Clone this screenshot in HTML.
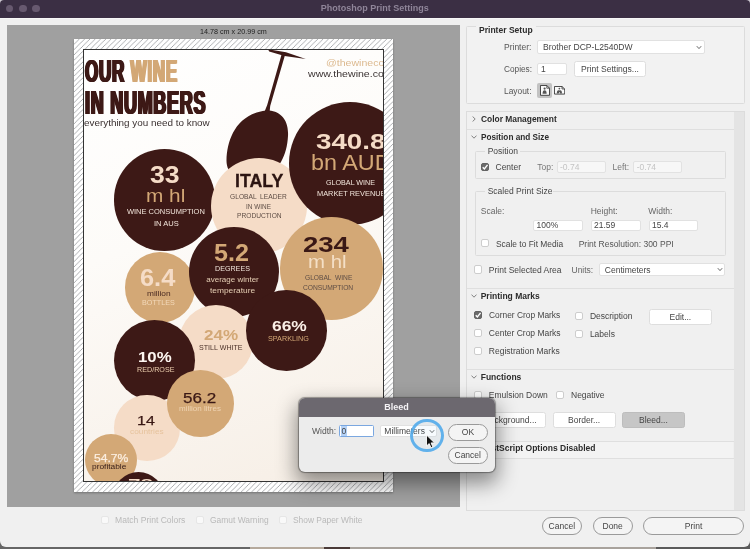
<!DOCTYPE html>
<html><head><meta charset="utf-8"><title>Photoshop Print Settings</title>
<style>
html,body{margin:0;padding:0}
body{width:750px;height:549px;position:relative;overflow:hidden;background:#4b4b4b;font-family:"Liberation Sans",sans-serif}
div,span,svg{position:absolute;box-sizing:border-box}
.t{white-space:pre;line-height:1;transform-origin:0 0}
.c{border-radius:50%}
.in{background:#fff;border:1px solid #e1e1e1;border-radius:2px}
.btn{background:#fff;border:1px solid #dedede;border-radius:2.5px}
.cb{background:#fff;border:1px solid #cdcdcd;border-radius:2px}
.fs{border:1px solid #dcdcdc;border-radius:1.5px}
.pill{background:#f4f4f4;border:1px solid #9a9a9a;border-radius:9px}
.sep{background:#dfdfdf}
</style></head><body>
<div style="left:0;top:0;width:750px;height:12px;background:#cfc8d3"></div>
<div style="left:0;top:540px;width:750px;height:9px;background:linear-gradient(to right,#666 0,#666 250px,#b5a99c 250px,#b5a99c 324px,#4a3a38 324px,#4a3a38 350px,#a8a29c 350px,#a8a29c 656px,#5a5a5a 656px)"></div>
<div id="win" style="will-change:transform;left:0;top:0;width:750px;height:546.8px;background:#f0f0f0;border-radius:4px 4px 6px 6px;overflow:hidden">
<div class="" style="left:0.00px;top:0.00px;width:750.00px;height:17.60px;background:#3b2f44"></div>
<div class="" style="left:0.00px;top:17.60px;width:750.00px;height:1.20px;background:#f7f7f7"></div>
<div class="c" style="left:5.60px;top:4.60px;width:7.80px;height:7.80px;background:#67596f"></div>
<div class="c" style="left:18.80px;top:4.60px;width:7.80px;height:7.80px;background:#67596f"></div>
<div class="c" style="left:32.20px;top:4.60px;width:7.80px;height:7.80px;background:#67596f"></div>
<span class="t" style="left:320.80px;top:4.08px;font-size:9px;color:#8f8599;font-weight:bold;">Photoshop Print Settings</span>
<div class="" style="left:6.50px;top:25.00px;width:453.10px;height:482.00px;background:#a0a0a0"></div>
<span class="t" style="left:200.00px;top:27.51px;font-size:7.2px;color:#1e1e1e;">14.78 cm x 20.99 cm</span>
<div class="" style="left:74.10px;top:39.10px;width:319.30px;height:453.00px;box-shadow:0 1px 2px rgba(0,0,0,0.28);background:#fff"></div>
<svg style="left:74.1px;top:39.1px" width="319.3" height="453" viewBox="0 0 319.3 453"><defs><pattern id="hatch" width="5.3" height="5.3" patternUnits="userSpaceOnUse"><path d="M-1 6.3 L6.3 -1 M-1 1 L1 -1 M4.3 6.3 L6.3 4.3" stroke="#97999c" stroke-width="0.8" fill="none"/></pattern></defs><rect x="0" y="0" width="319.3" height="453" fill="url(#hatch)"/></svg>
<div id="poster" style="left:83.4px;top:49.3px;width:300.7px;height:432.8px;overflow:hidden;background:linear-gradient(160deg,#ffffff 0%,#fdfbf8 40%,#f6eee5 100%)">
<div style="left:-83.4px;top:-49.3px;width:0;height:0">
<svg style="left:0;top:0;overflow:visible" width="750" height="549" viewBox="0 0 750 549"><g fill="#3d1916"><path d="M268 49.2 L286 52.2 L305.8 58.9 L284.5 56 L269.2 51.6 Z"/><path d="M282 53 L285.3 54 L270.2 106 L269.6 112 L264.8 111 L267.2 105 Z"/><path d="M266 110.5 C278 110 289 117.5 288 136 C287 155 279 172 262 178 C246 184 226 178 226.5 160 C227 140 236 114 266 110.5 Z"/></g></svg>
<div class="c" style="left:113.50px;top:149.40px;width:101.60px;height:101.60px;background:#3d1916"></div>
<div class="c" style="left:210.60px;top:157.80px;width:96.40px;height:96.40px;background:#f5dcc7"></div>
<div class="c" style="left:289.00px;top:102.20px;width:122.40px;height:122.40px;background:#3d1916"></div>
<div class="c" style="left:125.20px;top:252.40px;width:70.20px;height:70.20px;background:#d3a876"></div>
<div class="c" style="left:189.10px;top:226.50px;width:90.00px;height:90.00px;background:#3d1916"></div>
<div class="c" style="left:280.30px;top:217.20px;width:102.40px;height:102.40px;background:#d3a876"></div>
<div class="c" style="left:178.50px;top:304.60px;width:74.80px;height:74.80px;background:#f5dcc7"></div>
<div class="c" style="left:246.10px;top:290.40px;width:80.60px;height:80.60px;background:#3d1916"></div>
<div class="c" style="left:114.10px;top:319.90px;width:81.20px;height:81.20px;background:#3d1916"></div>
<div class="c" style="left:114.40px;top:395.40px;width:65.20px;height:65.20px;background:#f5dcc7"></div>
<div class="c" style="left:167.40px;top:370.10px;width:66.60px;height:66.60px;background:#d3a876"></div>
<div class="c" style="left:85.20px;top:434.20px;width:52.20px;height:52.20px;background:#d3a876"></div>
<div class="c" style="left:112.90px;top:471.80px;width:51.20px;height:51.20px;background:#3d1916"></div>
<span class="t" style="left:84.7px;top:55.67px;font-size:31.7px;font-weight:bold;letter-spacing:1.3px;color:#3d1916;text-shadow:0.9px 0 0 #3d1916,-0.9px 0 0 #3d1916,1.8px 0 0 #3d1916,-1.8px 0 0 #3d1916;transform:scaleX(0.5394)">OUR <span style="position:static;color:#d3a876;text-shadow:0.9px 0 0 #d3a876,-0.9px 0 0 #d3a876,1.8px 0 0 #d3a876,-1.8px 0 0 #d3a876;">WINE</span></span>
<span class="t" style="left:84.70px;top:86.57px;font-size:32.4px;color:#3d1916;font-weight:bold;letter-spacing:1.3px;transform:scaleX(0.5559);text-shadow:0.9px 0 0 #3d1916,-0.9px 0 0 #3d1916,1.8px 0 0 #3d1916,-1.8px 0 0 #3d1916;">IN NUMBERS</span>
<span class="t" style="left:84.20px;top:119.25px;font-size:8.8px;color:#3a3030;transform:scaleX(1.1229);">everything you need to know</span>
<span class="t" style="left:325.60px;top:57.90px;font-size:9.8px;color:#dcb98f;transform:scaleX(1.0781);">@thewineco</span>
<span class="t" style="left:308.00px;top:69.30px;font-size:9.8px;color:#3a3232;transform:scaleX(1.0802);">www.thewine.co</span>
<span class="t" style="left:150.10px;top:163.93px;font-size:23px;color:#f5dcc7;font-weight:bold;transform:scaleX(1.1570);">33</span>
<span class="t" style="left:145.50px;top:186.69px;font-size:18.8px;color:#d3a876;transform:scaleX(1.1065);">m hl</span>
<span class="t" style="left:126.90px;top:207.95px;font-size:7.5px;color:#f1e4da;">WINE CONSUMPTION</span>
<span class="t" style="left:153.80px;top:219.65px;font-size:7.5px;color:#f1e4da;transform:scaleX(1.0044);">IN AUS</span>
<span class="t" style="left:234.90px;top:172.09px;font-size:18.8px;color:#2c1512;font-weight:bold;transform:scaleX(0.9475);-webkit-text-stroke:0.3px #2c1512;">ITALY</span>
<span class="t" style="left:230.10px;top:192.95px;font-size:7.5px;color:#5e4d45;transform:scaleX(0.8871);">GLOBAL  LEADER</span>
<span class="t" style="left:246.00px;top:202.75px;font-size:7.5px;color:#5e4d45;transform:scaleX(0.8538);">IN WINE</span>
<span class="t" style="left:236.50px;top:212.35px;font-size:7.5px;color:#5e4d45;transform:scaleX(0.8846);">PRODUCTION</span>
<span class="t" style="left:315.60px;top:130.61px;font-size:22.2px;color:#f5dcc7;font-weight:bold;transform:scaleX(1.2510);">340.8</span>
<span class="t" style="left:310.60px;top:152.45px;font-size:22.5px;color:#d3a876;transform:scaleX(1.0381);">bn AUD</span>
<span class="t" style="left:326.10px;top:178.85px;font-size:7.5px;color:#f1e4da;transform:scaleX(0.9533);">GLOBAL WINE</span>
<span class="t" style="left:317.20px;top:189.85px;font-size:7.5px;color:#f1e4da;transform:scaleX(0.9861);">MARKET REVENUE</span>
<span class="t" style="left:303.10px;top:233.65px;font-size:22.5px;color:#3a1815;font-weight:bold;transform:scaleX(1.2226);">234</span>
<span class="t" style="left:307.50px;top:252.82px;font-size:18.4px;color:#f4dfc6;transform:scaleX(1.1075);">m hl</span>
<span class="t" style="left:304.60px;top:273.65px;font-size:7.5px;color:#5e4d45;transform:scaleX(0.8844);">GLOBAL  WINE</span>
<span class="t" style="left:303.40px;top:283.85px;font-size:7.5px;color:#5e4d45;transform:scaleX(0.8924);">CONSUMPTION</span>
<span class="t" style="left:214.10px;top:241.46px;font-size:24.5px;color:#d3a876;font-weight:bold;transform:scaleX(1.0276);">5.2</span>
<span class="t" style="left:214.70px;top:265.15px;font-size:7.5px;color:#f1e4da;transform:scaleX(0.9515);">DEGREES</span>
<span class="t" style="left:206.30px;top:275.53px;font-size:8px;color:#e6cfb4;">average winter</span>
<span class="t" style="left:209.60px;top:286.63px;font-size:8px;color:#e6cfb4;transform:scaleX(1.0456);">temperature</span>
<span class="t" style="left:271.70px;top:319.19px;font-size:14.9px;color:#faefe6;font-weight:bold;transform:scaleX(1.1669);">66%</span>
<span class="t" style="left:268.00px;top:334.72px;font-size:7.3px;color:#d3a876;transform:scaleX(0.9916);">SPARKLING</span>
<span class="t" style="left:140.30px;top:266.26px;font-size:24.5px;color:#f5dcc7;font-weight:bold;transform:scaleX(1.0364);">6.4</span>
<span class="t" style="left:147.40px;top:289.71px;font-size:7.2px;color:#4a2a22;transform:scaleX(1.1565);">million</span>
<span class="t" style="left:142.00px;top:298.92px;font-size:7.3px;color:#f3d9ba;transform:scaleX(0.9860);">BOTTLES</span>
<span class="t" style="left:203.90px;top:327.18px;font-size:15.5px;color:#d3a876;font-weight:bold;transform:scaleX(1.0992);">24%</span>
<span class="t" style="left:198.70px;top:343.97px;font-size:7.6px;color:#4a3028;transform:scaleX(0.9358);">STILL WHITE</span>
<span class="t" style="left:138.20px;top:349.15px;font-size:15.3px;color:#fdf6f0;font-weight:bold;transform:scaleX(1.0972);">10%</span>
<span class="t" style="left:136.90px;top:366.05px;font-size:7.5px;color:#eccfae;transform:scaleX(0.9573);">RED/ROSE</span>
<span class="t" style="left:182.80px;top:390.64px;font-size:14.6px;color:#3a1815;transform:scaleX(1.1683);-webkit-text-stroke:0.25px #3a1815;">56.2</span>
<span class="t" style="left:179.00px;top:405.37px;font-size:7.6px;color:#efd3b2;transform:scaleX(1.0580);">million litres</span>
<span class="t" style="left:136.90px;top:414.49px;font-size:13.6px;color:#3a1815;transform:scaleX(1.1766);-webkit-text-stroke:0.25px #3a1815;">14</span>
<span class="t" style="left:130.00px;top:428.17px;font-size:7.6px;color:#e6c39d;transform:scaleX(1.0928);">countries</span>
<span class="t" style="left:93.60px;top:451.68px;font-size:11.6px;color:#fbeee0;transform:scaleX(1.0459);-webkit-text-stroke:0.25px #fbeee0;">54.7%</span>
<span class="t" style="left:92.30px;top:462.57px;font-size:7.6px;color:#3a201a;transform:scaleX(1.1002);">profitable</span>
<span class="t" style="left:127.50px;top:476.60px;font-size:13px;color:#f5dcc7;font-weight:bold;transform:scaleX(1.7289);">78</span>
</div></div>
<div class="" style="left:83.20px;top:49.10px;width:301.10px;height:433.20px;border:0.7px solid #333"></div>
<div class="cb" style="left:101.10px;top:515.90px;width:8.20px;height:8.20px;border-color:#e6e6e6;background:#f9f9f9;"></div>
<span class="t" style="left:115.20px;top:516.22px;font-size:8.5px;color:#b9b9b9;transform:scaleX(1.0070);">Match Print Colors</span>
<div class="cb" style="left:196.10px;top:515.90px;width:8.20px;height:8.20px;border-color:#e6e6e6;background:#f9f9f9;"></div>
<span class="t" style="left:209.60px;top:516.22px;font-size:8.5px;color:#b9b9b9;transform:scaleX(0.9914);">Gamut Warning</span>
<div class="cb" style="left:278.80px;top:515.90px;width:8.20px;height:8.20px;border-color:#e6e6e6;background:#f9f9f9;"></div>
<span class="t" style="left:293.30px;top:516.22px;font-size:8.5px;color:#b9b9b9;transform:scaleX(0.9858);">Show Paper White</span>
<div class="fs" style="left:466.30px;top:25.90px;width:278.50px;height:78.10px;background:#f2f2f2"></div>
<div class="" style="left:476.00px;top:24.00px;width:60.00px;height:12.00px;background:linear-gradient(#f0f0f0 0,#f0f0f0 2.4px,#f2f2f2 2.4px)"></div>
<span class="t" style="left:479.20px;top:25.62px;font-size:8.5px;color:#2c2c2c;font-weight:bold;transform:scaleX(1.0043);">Printer Setup</span>
<span class="t" style="left:504.00px;top:43.22px;font-size:8.5px;color:#555;">Printer:</span>
<div class="in" style="left:537.00px;top:40.00px;width:167.70px;height:14.00px;"></div>
<span class="t" style="left:542.50px;top:43.22px;font-size:8.5px;color:#454545;transform:scaleX(1.0077);">Brother DCP-L2540DW</span>
<svg style="left:696px;top:44.5px" width="6" height="5" viewBox="0 0 6 5"><path d="M0.8 1.2 L3 3.6 L5.2 1.2" fill="none" stroke="#555" stroke-width="0.9"/></svg>
<span class="t" style="left:503.50px;top:65.22px;font-size:8.5px;color:#555;transform:scaleX(0.9715);">Copies:</span>
<div class="in" style="left:537.30px;top:63.20px;width:30.00px;height:11.60px;"></div>
<span class="t" style="left:541.00px;top:65.22px;font-size:8.5px;color:#454545;">1</span>
<div class="btn" style="left:573.50px;top:60.80px;width:72.00px;height:16.50px;"></div>
<span class="t" style="left:580.50px;top:65.22px;font-size:8.5px;color:#454545;transform:scaleX(1.0063);">Print Settings...</span>
<span class="t" style="left:504.00px;top:86.92px;font-size:8.5px;color:#555;transform:scaleX(0.9863);">Layout:</span>
<div class="" style="left:537.10px;top:83.30px;width:14.60px;height:14.40px;background:#c2c2c2;border-radius:2px"></div>
<svg style="left:539.9px;top:85.1px" width="10" height="10.8" viewBox="0 0 10 10.8"><path d="M0.5 0.5 H6.8 L9.5 3.2 V10.3 H0.5 Z" fill="#fbfbfb" stroke="#222" stroke-width="0.8"/><path d="M6.8 0.5 V3.2 H9.5" fill="none" stroke="#222" stroke-width="0.7"/><circle cx="4.6" cy="3.6" r="1.1" fill="#555"/><path d="M2.6 8.8 C2.6 6 3.4 5.2 4.6 5.2 C5.8 5.2 6.6 6 6.6 8.8 Z" fill="#555"/></svg>
<svg style="left:553.9px;top:86.1px" width="11.2" height="8.6" viewBox="0 0 11.2 8.6"><path d="M0.5 0.5 H8 L10.7 3 V8.1 H0.5 Z" fill="#fbfbfb" stroke="#222" stroke-width="0.8"/><path d="M8 0.5 V3 H10.7" fill="none" stroke="#222" stroke-width="0.7"/><circle cx="5.4" cy="2.6" r="0.9" fill="#555"/><path d="M2.8 7.4 C2.8 4.6 4 3.8 5.4 4.6 C6.8 3.8 8 4.6 8 7.4 L6.2 7.4 L5.4 5.8 L4.6 7.4 Z" fill="#555"/></svg>
<div class="" style="left:466.30px;top:110.90px;width:278.50px;height:399.90px;border:1px solid #dcdcdc;background:#f0f0f0"></div>
<div class="" style="left:734.00px;top:111.90px;width:9.80px;height:397.90px;background:#e4e4e4"></div>
<svg style="left:471.5px;top:116px" width="4" height="6" viewBox="0 0 4 6"><path d="M0.6 0.5 L3.2 3 L0.6 5.5" fill="none" stroke="#666" stroke-width="0.8"/></svg>
<span class="t" style="left:480.70px;top:115.12px;font-size:8.5px;color:#2c2c2c;font-weight:bold;transform:scaleX(0.9894);">Color Management</span>
<div class="sep" style="left:467.30px;top:128.80px;width:266.70px;height:1.00px;"></div>
<svg style="left:470.5px;top:134.8px" width="6" height="4" viewBox="0 0 6 4"><path d="M0.5 0.6 L3 3.2 L5.5 0.6" fill="none" stroke="#666" stroke-width="0.8"/></svg>
<span class="t" style="left:480.70px;top:132.92px;font-size:8.5px;color:#2c2c2c;font-weight:bold;transform:scaleX(0.9663);">Position and Size</span>
<div class="fs" style="left:474.50px;top:150.50px;width:251.50px;height:28.80px;"></div>
<div class="" style="left:484.50px;top:145.00px;width:35.50px;height:11.00px;background:#f0f0f0"></div>
<span class="t" style="left:487.70px;top:146.52px;font-size:8.5px;color:#444;">Position</span>
<div class="cb" style="left:480.60px;top:162.60px;width:8.20px;height:8.20px;background:#6b6b6b;border-color:#636363;"><svg style="left:-1px;top:-1px" width="8.2" height="8.2" viewBox="0 0 8 8"><path d="M1.7 4.2 L3.3 5.9 L6.4 1.9" fill="none" stroke="#fff" stroke-width="1.35"/></svg></div>
<span class="t" style="left:495.50px;top:162.92px;font-size:8.5px;color:#454545;">Center</span>
<span class="t" style="left:537.30px;top:162.92px;font-size:8.5px;color:#777;">Top:</span>
<div class="in" style="left:556.50px;top:161.30px;width:49.50px;height:11.30px;border-color:#e2e2e2;background:#f7f7f7"></div>
<span class="t" style="left:560.00px;top:163.12px;font-size:8.5px;color:#c4c4c4;">-0.74</span>
<span class="t" style="left:612.50px;top:162.92px;font-size:8.5px;color:#777;">Left:</span>
<div class="in" style="left:633.20px;top:161.30px;width:49.30px;height:11.30px;border-color:#e2e2e2;background:#f7f7f7"></div>
<span class="t" style="left:636.70px;top:163.12px;font-size:8.5px;color:#c4c4c4;">-0.74</span>
<div class="fs" style="left:474.50px;top:190.70px;width:251.50px;height:65.30px;"></div>
<div class="" style="left:484.50px;top:185.00px;width:68.50px;height:11.00px;background:#f0f0f0"></div>
<span class="t" style="left:487.70px;top:186.62px;font-size:8.5px;color:#444;">Scaled Print Size</span>
<span class="t" style="left:480.80px;top:206.92px;font-size:8.5px;color:#666;">Scale:</span>
<span class="t" style="left:590.70px;top:206.92px;font-size:8.5px;color:#666;">Height:</span>
<span class="t" style="left:648.30px;top:206.92px;font-size:8.5px;color:#666;">Width:</span>
<div class="in" style="left:533.30px;top:219.50px;width:50.20px;height:11.30px;"></div>
<span class="t" style="left:536.50px;top:221.42px;font-size:8.5px;color:#454545;">100%</span>
<div class="in" style="left:590.70px;top:219.50px;width:50.10px;height:11.30px;"></div>
<span class="t" style="left:594.00px;top:221.42px;font-size:8.5px;color:#454545;">21.59</span>
<div class="in" style="left:648.70px;top:219.50px;width:49.30px;height:11.30px;"></div>
<span class="t" style="left:652.00px;top:221.42px;font-size:8.5px;color:#454545;">15.4</span>
<div class="cb" style="left:480.60px;top:239.20px;width:8.20px;height:8.20px;"></div>
<span class="t" style="left:495.50px;top:239.52px;font-size:8.5px;color:#454545;transform:scaleX(0.9878);">Scale to Fit Media</span>
<span class="t" style="left:578.70px;top:239.52px;font-size:8.5px;color:#555;">Print Resolution: 300 PPI</span>
<div class="cb" style="left:473.70px;top:265.40px;width:8.20px;height:8.20px;"></div>
<span class="t" style="left:488.80px;top:265.72px;font-size:8.5px;color:#454545;">Print Selected Area</span>
<span class="t" style="left:571.50px;top:265.72px;font-size:8.5px;color:#666;">Units:</span>
<div class="in" style="left:599.20px;top:262.50px;width:125.50px;height:13.50px;"></div>
<span class="t" style="left:604.80px;top:265.62px;font-size:8.5px;color:#454545;">Centimeters</span>
<svg style="left:716.5px;top:267px" width="6" height="5" viewBox="0 0 6 5"><path d="M0.8 1.2 L3 3.6 L5.2 1.2" fill="none" stroke="#555" stroke-width="0.9"/></svg>
<div class="sep" style="left:467.30px;top:287.80px;width:266.70px;height:1.00px;"></div>
<svg style="left:470.5px;top:293.5px" width="6" height="4" viewBox="0 0 6 4"><path d="M0.5 0.6 L3 3.2 L5.5 0.6" fill="none" stroke="#666" stroke-width="0.8"/></svg>
<span class="t" style="left:480.70px;top:291.62px;font-size:8.5px;color:#2c2c2c;font-weight:bold;">Printing Marks</span>
<div class="cb" style="left:473.70px;top:310.70px;width:8.20px;height:8.20px;background:#6b6b6b;border-color:#636363;"><svg style="left:-1px;top:-1px" width="8.2" height="8.2" viewBox="0 0 8 8"><path d="M1.7 4.2 L3.3 5.9 L6.4 1.9" fill="none" stroke="#fff" stroke-width="1.35"/></svg></div>
<span class="t" style="left:488.80px;top:311.02px;font-size:8.5px;color:#454545;transform:scaleX(0.9852);">Corner Crop Marks</span>
<div class="cb" style="left:574.50px;top:311.90px;width:8.20px;height:8.20px;"></div>
<span class="t" style="left:589.90px;top:312.22px;font-size:8.5px;color:#454545;">Description</span>
<div class="btn" style="left:648.70px;top:308.70px;width:63.20px;height:16.80px;"></div>
<span class="t" style="left:669.50px;top:313.42px;font-size:8.5px;color:#454545;">Edit...</span>
<div class="cb" style="left:473.70px;top:328.60px;width:8.20px;height:8.20px;"></div>
<span class="t" style="left:488.80px;top:328.92px;font-size:8.5px;color:#454545;">Center Crop Marks</span>
<div class="cb" style="left:574.50px;top:329.90px;width:8.20px;height:8.20px;"></div>
<span class="t" style="left:589.90px;top:330.22px;font-size:8.5px;color:#454545;">Labels</span>
<div class="cb" style="left:473.70px;top:346.70px;width:8.20px;height:8.20px;"></div>
<span class="t" style="left:488.80px;top:347.02px;font-size:8.5px;color:#454545;">Registration Marks</span>
<div class="sep" style="left:467.30px;top:368.50px;width:266.70px;height:1.00px;"></div>
<svg style="left:470.5px;top:374.7px" width="6" height="4" viewBox="0 0 6 4"><path d="M0.5 0.6 L3 3.2 L5.5 0.6" fill="none" stroke="#666" stroke-width="0.8"/></svg>
<span class="t" style="left:480.70px;top:372.82px;font-size:8.5px;color:#2c2c2c;font-weight:bold;">Functions</span>
<div class="cb" style="left:473.70px;top:390.90px;width:8.20px;height:8.20px;"></div>
<span class="t" style="left:488.80px;top:391.22px;font-size:8.5px;color:#454545;">Emulsion Down</span>
<div class="cb" style="left:556.30px;top:390.90px;width:8.20px;height:8.20px;"></div>
<span class="t" style="left:571.00px;top:391.22px;font-size:8.5px;color:#454545;">Negative</span>
<div class="btn" style="left:474.00px;top:411.50px;width:71.90px;height:16.50px;"></div>
<span class="t" style="left:484.20px;top:416.22px;font-size:8.5px;color:#454545;">Background...</span>
<div class="btn" style="left:552.50px;top:411.50px;width:63.00px;height:16.50px;"></div>
<span class="t" style="left:568.00px;top:416.22px;font-size:8.5px;color:#454545;">Border...</span>
<div class="btn" style="left:622.00px;top:411.50px;width:62.70px;height:16.50px;background:#c6c6c6;border-color:#bdbdbd"></div>
<span class="t" style="left:639.00px;top:416.22px;font-size:8.5px;color:#454545;">Bleed...</span>
<div class="sep" style="left:467.30px;top:440.80px;width:266.70px;height:1.00px;"></div>
<div class="" style="left:467.70px;top:441.80px;width:265.80px;height:15.80px;background:#f3f3f3"></div>
<span class="t" style="left:480.70px;top:444.42px;font-size:8.5px;color:#2c2c2c;font-weight:bold;">PostScript Options Disabled</span>
<div class="sep" style="left:467.30px;top:457.50px;width:266.70px;height:1.00px;"></div>
<div class="pill" style="left:541.70px;top:517.30px;width:40.30px;height:17.40px;"></div>
<span class="t" style="left:548.60px;top:521.72px;font-size:8.5px;color:#454545;">Cancel</span>
<div class="pill" style="left:592.70px;top:517.30px;width:40.00px;height:17.40px;"></div>
<span class="t" style="left:602.50px;top:521.72px;font-size:8.5px;color:#454545;">Done</span>
<div class="pill" style="left:643.30px;top:517.30px;width:100.70px;height:17.40px;"></div>
<span class="t" style="left:684.80px;top:521.72px;font-size:8.5px;color:#454545;">Print</span>
<div id="dlg" style="left:298.8px;top:398.3px;width:195.8px;height:73.3px;border-radius:6px;background:#ececec;box-shadow:0 9px 20px 3px rgba(0,0,0,0.42),0 0 1px 0.5px rgba(0,0,0,0.35);overflow:hidden"></div>
<div style="left:298.8px;top:398.3px;width:195.8px;height:73.3px;border-radius:6px;overflow:hidden">
<div style="left:0;top:0;width:196px;height:18.3px;background:#6c686f"></div>
</div>
<span class="t" style="left:384.25px;top:403.18px;font-size:9px;color:#f4f2f5;font-weight:bold;">Bleed</span>
<span class="t" style="left:312.00px;top:427.22px;font-size:8.5px;color:#555;">Width:</span>
<div class="" style="left:339.30px;top:424.60px;width:34.90px;height:12.70px;border:1.2px solid #7aa7e0;border-radius:1.5px;background:#fff"></div>
<div class="" style="left:341.30px;top:426.40px;width:5.30px;height:9.20px;background:#b5d2f7"></div>
<span class="t" style="left:341.60px;top:427.22px;font-size:8.5px;color:#454545;">0</span>
<div class="in" style="left:379.50px;top:424.60px;width:57.80px;height:12.70px;"></div>
<span class="t" style="left:384.30px;top:427.22px;font-size:8.5px;color:#454545;">Millimeters</span>
<svg style="left:428.8px;top:428.8px" width="6" height="5" viewBox="0 0 6 5"><path d="M0.8 1.2 L3 3.6 L5.2 1.2" fill="none" stroke="#555" stroke-width="0.9"/></svg>
<div class="pill" style="left:447.80px;top:424.00px;width:40.20px;height:16.80px;"></div>
<span class="t" style="left:461.80px;top:428.02px;font-size:8.5px;color:#454545;">OK</span>
<div class="pill" style="left:447.80px;top:447.20px;width:40.20px;height:16.60px;"></div>
<span class="t" style="left:454.50px;top:451.42px;font-size:8.5px;color:#454545;">Cancel</span>
<div class="c" style="left:410.40px;top:418.60px;width:33.80px;height:33.80px;border:3.2px solid rgba(78,168,234,0.88);background:rgba(120,190,240,0.06)"></div>
<svg style="left:424.5px;top:434px" width="12" height="16" viewBox="0 0 12 16"><path d="M1.5 1 L1.5 12 L4.2 9.6 L6 13.8 L7.9 13 L6.1 8.9 L9.6 8.9 Z" fill="#111" stroke="#fff" stroke-width="0.9" stroke-linejoin="round"/></svg>
</div>
</body></html>
